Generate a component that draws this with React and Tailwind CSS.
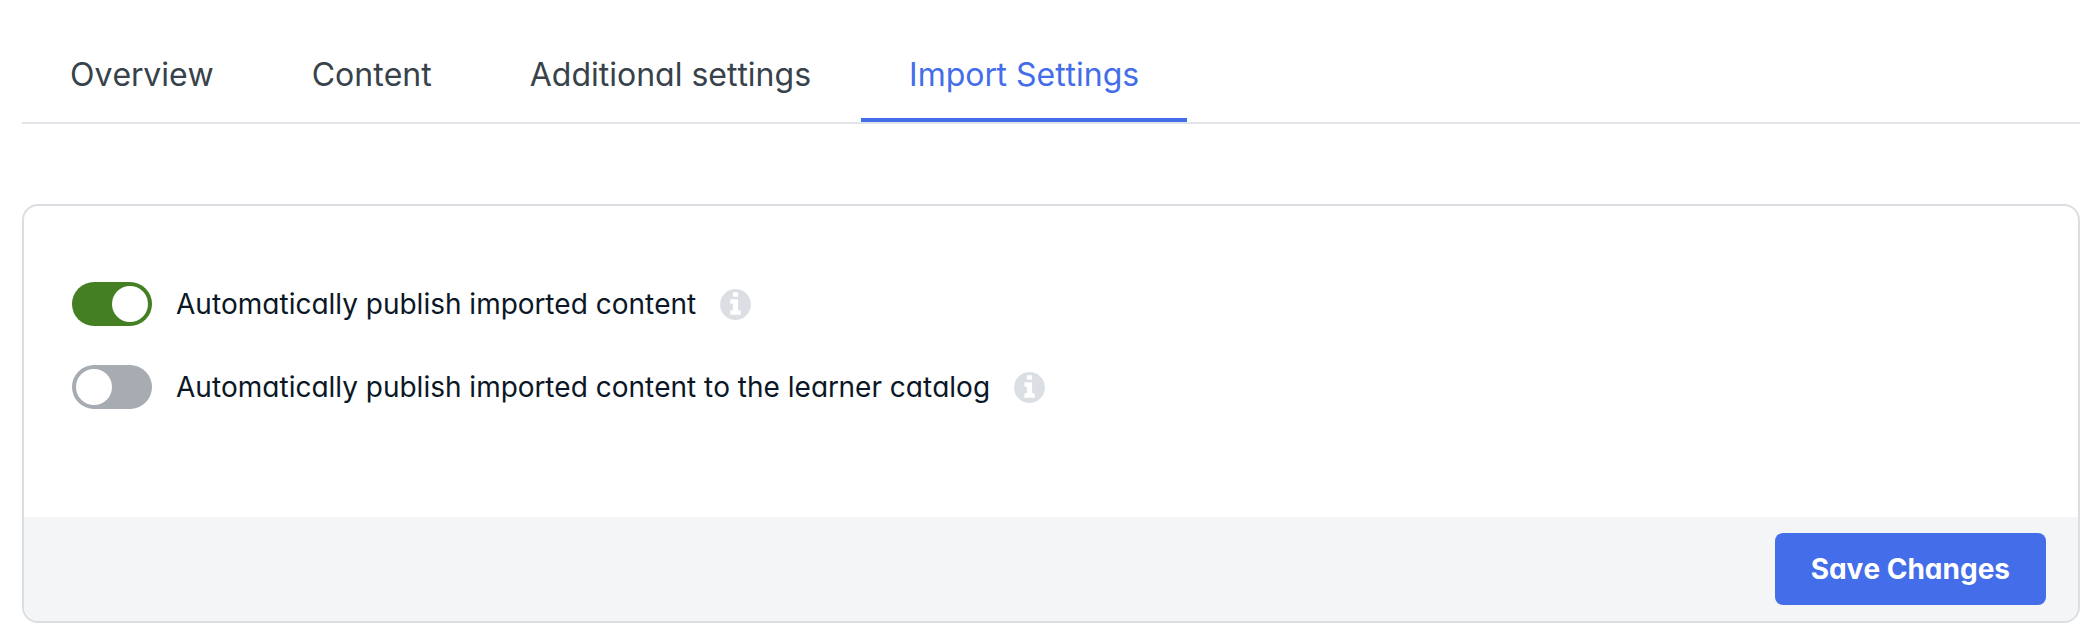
import { useState } from "react"

const tabs = ["Overview", "Content", "Additional settings", "Import Settings"]

function InfoIcon() {
  return (
    <svg viewBox="128 128 1536 1536" className="size-[31px] fill-[#dbdfe4]" aria-hidden="true">
      <path d="M1152 1376v-160q0-14-9-23t-23-9h-96v-512q0-14-9-23t-23-9h-320q-14 0-23 9t-9 23v160q0 14 9 23t23 9h96v320h-96q-14 0-23 9t-9 23v160q0 14 9 23t23 9h448q14 0 23-9t9-23zm-128-896v-160q0-14-9-23t-23-9h-192q-14 0-23 9t-9 23v160q0 14 9 23t23 9h192q14 0 23-9t9-23zm640 416q0 209-103 385.5t-279.5 279.5-385.5 103-385.5-103-279.5-279.5-103-385.5 103-385.5 279.5-279.5 385.5-103 385.5 103 279.5 279.5 103 385.5z" />
    </svg>
  )
}

function Toggle({ id, label, checked, onChange }) {
  return (
    <div className="flex items-center gap-6">
      <input
        id={id}
        type="checkbox"
        role="switch"
        checked={checked}
        onChange={(e) => onChange(e.target.checked)}
        className="h-11 w-20 shrink-0 cursor-pointer appearance-none rounded-full bg-[#a7abb2] p-1 before:block before:size-9 before:rounded-full before:bg-white before:content-[''] checked:bg-[#447f24] checked:before:ml-auto"
      />
      <label htmlFor={id} className="text-[28px] leading-11 text-[#0b1726]">
        {label}
      </label>
      <button type="button" aria-label="More information">
        <InfoIcon />
      </button>
    </div>
  )
}

export default function App() {
  const [activeTab, setActiveTab] = useState("Import Settings")
  const [autoPublish, setAutoPublish] = useState(true)
  const [publishToCatalog, setPublishToCatalog] = useState(false)

  return (
    <main className="bg-white pt-7 pr-4 pb-5 pl-[22px] font-['Inter',sans-serif] [font-feature-settings:'cv11'] [font-kerning:none]">
      <div role="tablist" className="flex gap-0.5 border-b-2 border-[#e1e5ea]">
        {tabs.map((tab) => (
          <button
            key={tab}
            type="button"
            role="tab"
            aria-selected={tab === activeTab}
            onClick={() => setActiveTab(tab)}
            className={`cursor-pointer border-b-4 px-12 pt-[26px] pb-[22px] text-[32px] leading-[42px] ${
              tab === activeTab
                ? "border-[#446de9] text-[#446de9]"
                : "border-transparent text-[#37424b]"
            }`}
          >
            {tab}
          </button>
        ))}
      </div>

      <form
        onSubmit={(e) => e.preventDefault()}
        className="mt-20 overflow-hidden rounded-2xl border-2 border-[#dadee3]"
      >
        <div className="flex flex-col gap-[39px] px-12 pt-[76px] pb-[108px]">
          <Toggle
            id="auto-publish"
            label="Automatically publish imported content"
            checked={autoPublish}
            onChange={setAutoPublish}
          />
          <Toggle
            id="publish-to-catalog"
            label="Automatically publish imported content to the learner catalog"
            checked={publishToCatalog}
            onChange={setPublishToCatalog}
          />
        </div>
        <div className="flex justify-end bg-[#f3f5f7] px-8 py-4">
          <button
            type="submit"
            className="h-18 cursor-pointer rounded-lg bg-[#446de9] px-9 text-[28px] font-bold text-white"
          >
            Save Changes
          </button>
        </div>
      </form>
    </main>
  )
}
